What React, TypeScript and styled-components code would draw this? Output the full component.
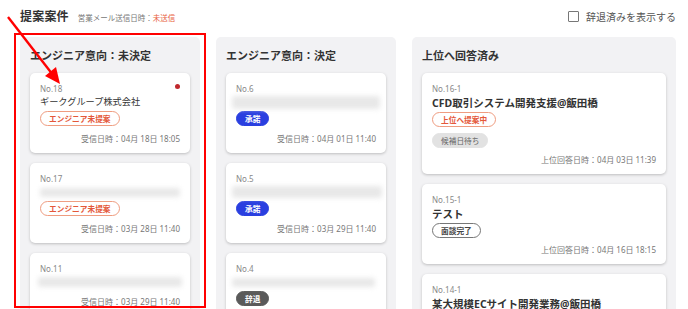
import React from "react";
import styled, { createGlobalStyle } from "styled-components";

const Global = createGlobalStyle`
  html, body { margin: 0; padding: 0; background: #ffffff; }
  body { font-family: "Noto Sans", "Noto Sans CJK JP", sans-serif; color: #333; overflow: hidden; }
  * { box-sizing: border-box; }
`;

const Page = styled.div`
  position: relative;
  width: 688px;
  height: 309px;
  overflow: hidden;
  padding: 6px 12px 0 20px;
`;

const Header = styled.div`
  display: flex;
  align-items: center;
  height: 20px;
  margin-bottom: 11px;
`;

const Title = styled.h1`
  margin: 0;
  font-size: 12px;
  font-weight: 700;
  color: #333;
  letter-spacing: 0.2px;
`;

const SubInfo = styled.span`
  margin-left: 9px;
  margin-top: 2px;
  font-size: 7.5px;
  color: #777;
`;

const Unsent = styled.span`
  color: #e8603c;
`;

const Toggle = styled.label`
  margin-left: auto;
  display: flex;
  align-items: center;
  gap: 7px;
  font-size: 10px;
  color: #555;
`;

const Box = styled.span`
  width: 11px;
  height: 11px;
  border: 1.3px solid #777;
  border-radius: 1px;
  background: #fff;
`;

const Board = styled.div`
  display: grid;
  grid-template-columns: 180px 180px 1fr;
  gap: 16px;
  align-items: start;
`;

const Lane = styled.section`
  background: #f2f2f4;
  border-radius: 5px;
  padding: 12px 10px;
  min-height: 320px;
  display: flex;
  flex-direction: column;
  gap: 10px;
`;

const LaneTitle = styled.h2`
  margin: 0;
  font-size: 11px;
  line-height: 14px;
  font-weight: 700;
  color: #333;
`;

const Card = styled.div`
  position: relative;
  background: #fff;
  border-radius: 5px;
  box-shadow: 0 1px 3px rgba(0, 0, 0, 0.22);
  padding: 10px 10px 7px;
  display: flex;
  flex-direction: column;
  align-items: flex-start;
`;

const No = styled.div`
  font-size: 8px;
  line-height: 12px;
  color: #888;
`;

const Name = styled.div<{ $bold?: boolean }>`
  font-size: ${(p) => (p.$bold ? "10.5px" : "9.2px")};
  line-height: ${(p) => (p.$bold ? "16px" : "14px")};
  font-weight: ${(p) => (p.$bold ? 700 : 400)};
  color: #333;
  white-space: nowrap;
`;

const Blur = styled.div<{ $h: number; $w: number; $ml: number }>`
  height: 14px;
  width: ${(p) => p.$w}px;
  margin-left: ${(p) => p.$ml}px;
  display: flex;
  align-items: center;
  &::before {
    content: "";
    display: block;
    width: 100%;
    height: ${(p) => p.$h}px;
    background: #e8e8e8;
    border-radius: 3px;
    filter: blur(2.5px);
  }
`;

type BadgeKind = "orange" | "blue" | "dark" | "chip" | "outline";

const badgeStyles: Record<BadgeKind, string> = {
  orange: "color:#e4583a;border:1px solid #ef9c80;background:#fff;",
  blue: "color:#fff;border:1px solid #2a3fe0;background:#2a3fe0;",
  dark: "color:#fff;border:1px solid #5a5a5a;background:#5a5a5a;",
  chip: "color:#666;border:1px solid #e2e2e2;background:#e2e2e2;font-weight:400;",
  outline: "color:#444;border:1px solid #777;background:#fff;",
};

const Badge = styled.span<{ $kind: BadgeKind; $mt?: number }>`
  display: inline-flex;
  align-items: center;
  height: 15px;
  padding: 0 8px;
  border-radius: 8px;
  font-size: 7.7px;
  font-weight: 700;
  margin-top: ${(p) => p.$mt ?? 2}px;
  ${(p) => badgeStyles[p.$kind]}
`;

const DateLine = styled.div<{ $mt?: number }>`
  align-self: stretch;
  text-align: right;
  font-size: 8px;
  line-height: 14px;
  color: #777;
  margin-top: ${(p) => p.$mt ?? 6}px;
`;

const Dot = styled.span`
  position: absolute;
  top: 11px;
  right: 10px;
  width: 5px;
  height: 5px;
  border-radius: 50%;
  background: #c0282d;
`;

const Highlight = styled.div`
  position: absolute;
  left: 14px;
  top: 33px;
  width: 192px;
  height: 275px;
  border: 2px solid #ff0000;
  pointer-events: none;
`;

const Arrow = styled.svg`
  position: absolute;
  left: 0;
  top: 0;
  pointer-events: none;
`;

export default function App() {
  return (
    <>
      <Global />
      <Page>
        <Header>
          <Title>提案案件</Title>
          <SubInfo>
            営業メール送信日時：<Unsent>未送信</Unsent>
          </SubInfo>
          <Toggle>
            <Box />
            辞退済みを表示する
          </Toggle>
        </Header>
        <Board>
          <Lane>
            <LaneTitle>エンジニア意向：未決定</LaneTitle>
            <Card>
              <Dot />
              <No>No.18</No>
              <Name>ギークグループ株式会社</Name>
              <Badge $kind="orange">エンジニア未提案</Badge>
              <DateLine>受信日時：04月 18日 18:05</DateLine>
            </Card>
            <Card>
              <No>No.17</No>
              <Blur $h={9} $w={140} $ml={0} />
              <Badge $kind="orange">エンジニア未提案</Badge>
              <DateLine>受信日時：03月 28日 11:40</DateLine>
            </Card>
            <Card>
              <No>No.11</No>
              <Blur $h={10} $w={144} $ml={-2} />
              <DateLine>受信日時：03月 29日 11:40</DateLine>
            </Card>
          </Lane>
          <Lane>
            <LaneTitle>エンジニア意向：決定</LaneTitle>
            <Card>
              <No>No.6</No>
              <Blur $h={13} $w={148} $ml={-4} />
              <Badge $kind="blue">承諾</Badge>
              <DateLine>受信日時：04月 01日 11:40</DateLine>
            </Card>
            <Card>
              <No>No.5</No>
              <Blur $h={12} $w={150} $ml={-4} />
              <Badge $kind="blue">承諾</Badge>
              <DateLine>受信日時：03月 29日 11:40</DateLine>
            </Card>
            <Card>
              <No>No.4</No>
              <Blur $h={9} $w={143} $ml={-4} />
              <Badge $kind="dark">辞退</Badge>
            </Card>
          </Lane>
          <Lane>
            <LaneTitle>上位へ回答済み</LaneTitle>
            <Card>
              <No>No.16-1</No>
              <Name $bold>CFD取引システム開発支援@飯田橋</Name>
              <Badge $kind="orange" $mt={1}>上位へ提案中</Badge>
              <Badge $kind="chip" $mt={6}>候補日待ち</Badge>
              <DateLine $mt={5}>上位回答日時：04月 03日 11:39</DateLine>
            </Card>
            <Card>
              <No>No.15-1</No>
              <Name $bold>テスト</Name>
              <Badge $kind="outline" $mt={1}>面談完了</Badge>
              <DateLine $mt={5}>上位回答日時：04月 16日 18:15</DateLine>
            </Card>
            <Card>
              <No>No.14-1</No>
              <Name $bold>某大規模ECサイト開発業務@飯田橋</Name>
            </Card>
          </Lane>
        </Board>
        <Highlight />
        <Arrow width="80" height="100" viewBox="0 0 80 100">
          <line x1="8" y1="17" x2="53" y2="75" stroke="#ff0000" strokeWidth="2.4" />
          <polygon points="60,84 45,76 56,67" fill="#ff0000" />
        </Arrow>
      </Page>
    </>
  );
}
